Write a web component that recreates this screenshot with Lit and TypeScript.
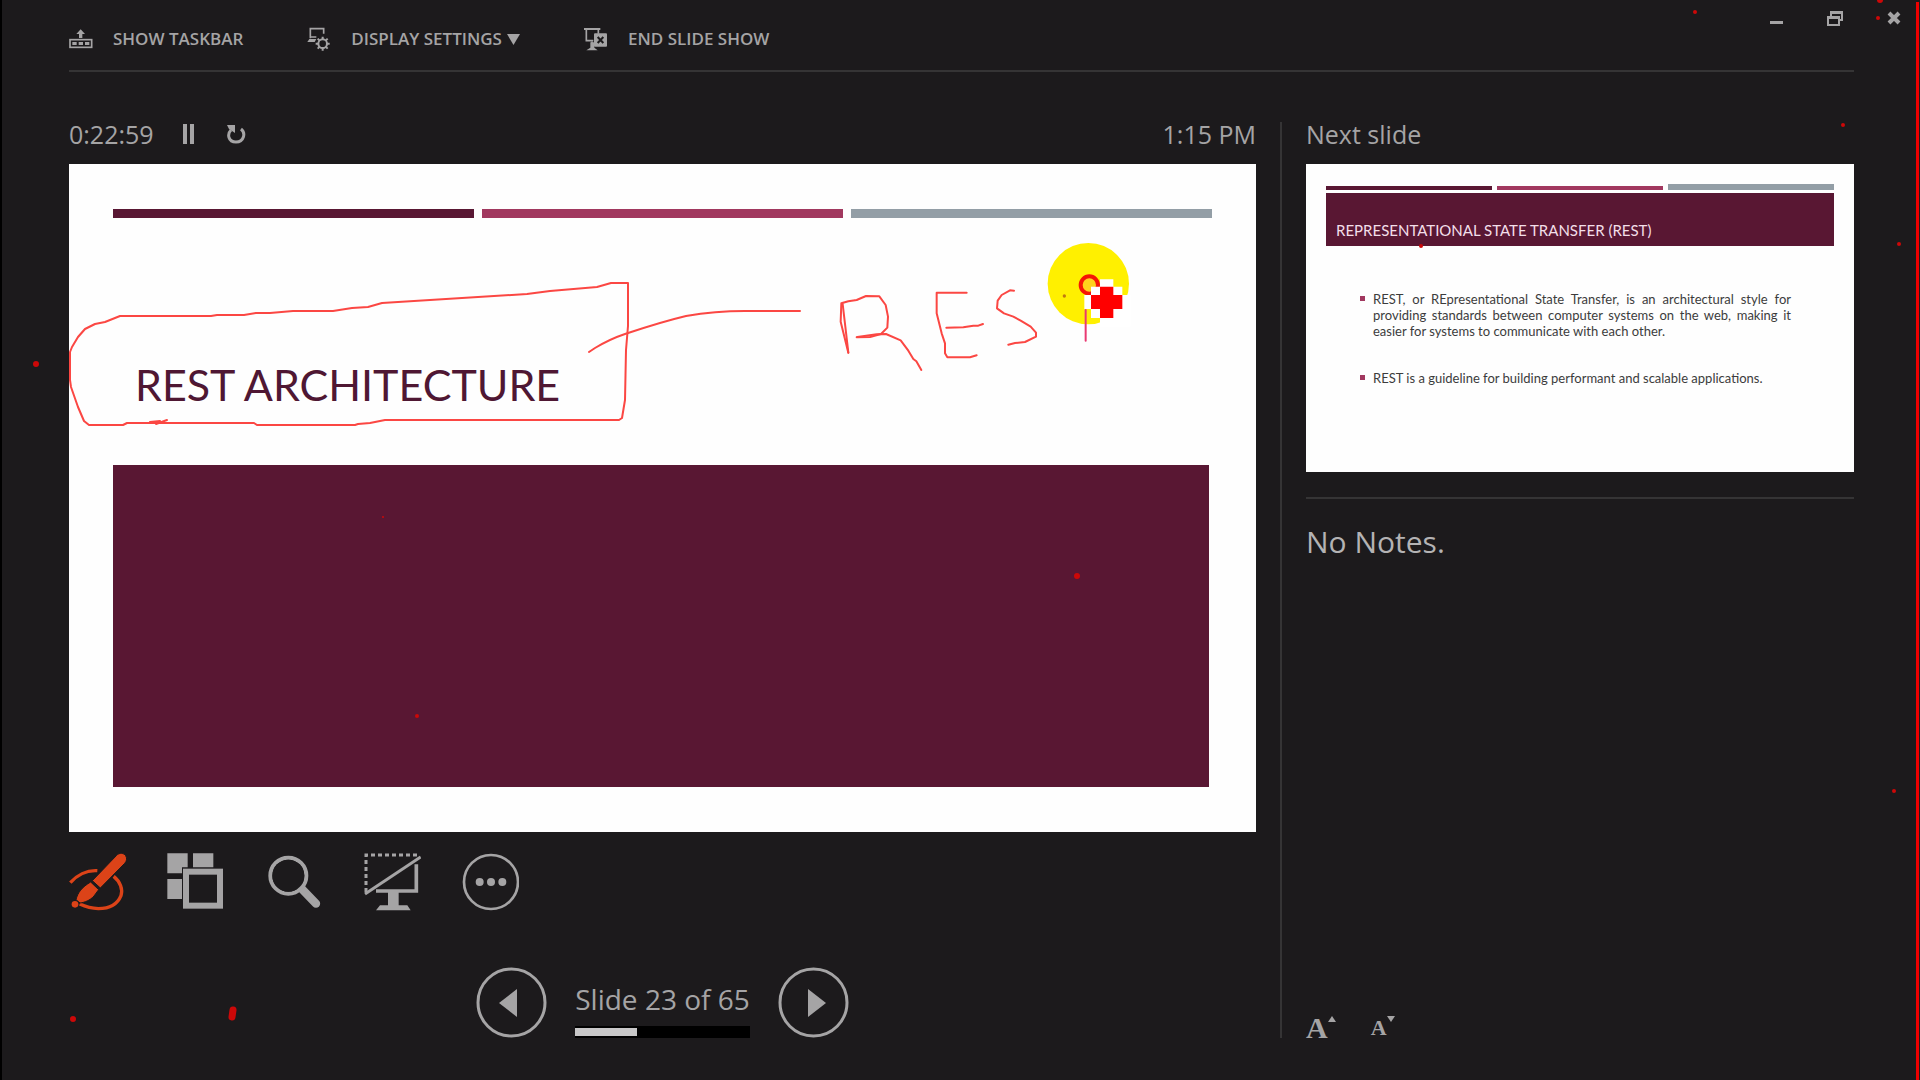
import { LitElement, html, css, svg } from "lit";
import { customElement, property, state } from "lit/decorators.js";

/** The three accent bars that run across the top of every slide. */
@customElement("accent-bars")
class AccentBars extends LitElement {
  static styles = css`
    :host {
      display: grid;
      grid-template-columns: repeat(3, 1fr);
      column-gap: var(--bar-gap, 8px);
      align-items: end;
    }
    .bar {
      height: var(--bar-height, 9px);
    }
    .dark {
      background: #591733;
    }
    .rose {
      background: #a1385f;
    }
    .slate {
      background: #939ea6;
      height: var(--last-bar-height, var(--bar-height, 9px));
    }
  `;
  render() {
    return html`<span class="bar dark"></span><span class="bar rose"></span><span class="bar slate"></span>`;
  }
}

@customElement("current-slide")
class CurrentSlide extends LitElement {
  static styles = css`
    :host {
      display: block;
      position: relative;
      aspect-ratio: 1187 / 668;
      background: #fefefe;
      color: #4f1733;
    }
    .frame {
      box-sizing: border-box;
      height: 100%;
      padding: 45px 44px;
      display: grid;
      grid-template-rows: auto 247fr 322fr;
    }
    .title {
      align-self: end;
      margin: 0;
      padding: 0 22px 56px;
      font: 400 43px/48px Lato, "Liberation Sans", sans-serif;
    }
    .block {
      background: #591733;
      margin-right: 3px;
    }
    .ink {
      position: absolute;
      inset: 0;
      width: 100%;
      height: 100%;
      overflow: visible;
      pointer-events: none;
    }
    .stroke {
      fill: none;
      stroke: #fb4743;
      stroke-width: 2;
      stroke-linejoin: round;
      stroke-linecap: round;
    }
    .thick {
      stroke-width: 6;
    }
  `;
  render() {
    return html`
      <div class="frame">
        <accent-bars></accent-bars>
        <h1 class="title">REST ARCHITECTURE</h1>
        <div class="block"></div>
      </div>
      <svg class="ink" viewBox="69 164 1187 668" aria-hidden="true">
        <path class="stroke" d="M628 283H611L597 287L550 291L527 294L382 303L368 307L352 308L333 311H293L270 313H256L244 315H217L211 316H120L105 322L95 324L85 329L78 337L72 347L70 352V380L71 387L78 407L84 421L89 425H123L127 423H254L257 425H355L358 424L370 423L385 420H619L622 418L625 400L626 350L628 326Z"/>
        <path class="stroke" d="M150 422L160 421L156 424L167 420"/>
        <path class="stroke" d="M589 352L595 348C605 342 613 338 625 334C646 327 665 321 686 316C715 311 730 311 745 311H800"/>
        <g transform="translate(780 160) scale(0.33333)">
          <circle cx="925" cy="371" r="122" fill="#fff000"/>
          <circle cx="853" cy="408" r="5" fill="#c07a10"/>
          <circle cx="928" cy="375" r="26" fill="#ffd21c" stroke="#f51505" stroke-width="12"/>
          <path fill="#fff" d="M960 358H1000V380H1027V405H1052V500H960V474H933V447H913V405H933V380H960Z"/>
          <path fill="#f00" d="M960 380H1000V405H1027V447H1000V474H960V447H933V405H960Z"/>
          <g class="stroke thick">
            <path d="M205 578L182 485L184 430L205 424L230 420L258 408L298 409L317 435L324 470L322 503L303 522L270 531L230 532"/>
            <path d="M188 432L196 500L205 578"/>
            <path d="M232 531L290 523L318 522L362 541L385 572L400 597L409 604L424 630"/>
            <path d="M560 398H470V460L485 520L495 550V580L502 592H570L590 586"/>
            <path d="M499 503L550 502L580 497H595L609 492"/>
            <path d="M702 392L690 391L665 405L653 422L651 445L672 460L700 470L722 482L752 500L768 518V530L735 546L705 549L685 554"/>
            <path d="M917 450V542" stroke="#e93a72"/>
          </g>
        </g>
      </svg>
    `;
  }
}

@customElement("next-slide")
class NextSlide extends LitElement {
  static styles = css`
    :host {
      display: block;
      box-sizing: border-box;
      aspect-ratio: 548 / 308;
      padding: 20px;
      background: #fefefe;
      color: #3c3c3c;
      font: 400 13px/16px Lato, "Liberation Sans", sans-serif;
      --bar-gap: 5px;
      --bar-height: 4px;
      --last-bar-height: 6px;
    }
    .title {
      margin: 3px 0 0;
      padding: 28px 10px 7px;
      background: #591733;
      color: #f3dfe9;
      font-weight: 400;
      font-size: 15px;
      line-height: 18px;
    }
    .points {
      list-style: none;
      margin: 0;
      padding: 45px 43px 0 34px;
      display: grid;
      row-gap: 31px;
    }
    .point {
      display: grid;
      grid-template-columns: 5px 1fr;
      column-gap: 8px;
      text-align: justify;
    }
    .point::before {
      content: "";
      width: 5px;
      height: 5px;
      margin-top: 5px;
      background: #a1385f;
    }
  `;
  render() {
    return html`
      <accent-bars></accent-bars>
      <h2 class="title">REPRESENTATIONAL STATE TRANSFER (REST)</h2>
      <ul class="points">
        <li class="point">REST, or REpresentational State Transfer, is an architectural style for providing standards between computer systems on the web, making it easier for systems to communicate with each other.</li>
        <li class="point">REST is a guideline for building performant and scalable applications.</li>
      </ul>
    `;
  }
}

const icons = {
  taskbar: svg`<path fill="currentColor" d="M62 43L75 57H67V69H57V57H49Z"/><rect x="30" y="74" width="65" height="23" fill="none" stroke="currentColor" stroke-width="5"/><path fill="currentColor" d="M37 81h13v9h-13zM56 81h13v9h-13zM75 81h13v9h-13z"/>`,
  display: svg`<path fill="none" stroke="currentColor" stroke-width="5" d="M61 70V41H101V56M61 66H79"/><path fill="currentColor" d="M58 72H79L74 81H52Z"/><circle cx="98" cy="86" r="13" fill="none" stroke="currentColor" stroke-width="6"/><path stroke="currentColor" stroke-width="6" d="M98 73V65M98 99V107M85 86H77M111 86H119M89 77L83 71M107 77L113 71M89 95L83 101M107 95L113 101"/>`,
  end: svg`<path fill="none" stroke="currentColor" stroke-width="6" d="M873 42H922"/><path fill="none" stroke="currentColor" stroke-width="5" d="M880 44V77H901M916 44V56M897 80V100"/><path fill="currentColor" d="M892 82H904V98L914 106H880L892 98Z"/><rect x="903" y="55" width="39" height="40" rx="3" fill="currentColor"/><path d="M914 66L931 84M931 66L914 84" stroke="#1c1a1c" stroke-width="6"/>`,
  pen: svg`<g fill="none" stroke="currentColor" stroke-width="10"><path d="M91 158C110 136 140 120 172 122"/><path d="M221 139C241 155 249 178 243 197C232 224 205 236 175 236C152 235 137 230 119 222"/></g><circle cx="105" cy="223" r="10" fill="currentColor"/><path fill="currentColor" stroke="#1c1a1c" stroke-width="3" d="M230 76C238 67 252 69 257 77C262 85 260 94 254 100L181 174L157 152ZM152 156L176 179L162 198C149 212 134 217 120 219L108 209C113 188 126 171 152 156Z"/>`,
  grid: svg`<path fill="currentColor" d="M382 70H443V112H426V130H382ZM459 70H520V112H459ZM382 147H426V207H382Z"/><rect x="438" y="125" width="102" height="102" fill="none" stroke="currentColor" stroke-width="18"/>`,
  zoom: svg`<circle cx="745" cy="137" r="54" fill="none" stroke="currentColor" stroke-width="12"/><path d="M784 175L828 221" stroke="currentColor" stroke-width="25" stroke-linecap="round"/><circle cx="745" cy="137" r="48" fill="#1c1a1c"/>`,
  black: svg`<path fill="none" stroke="currentColor" stroke-width="9" stroke-dasharray="12 9" d="M978 186V75H1132"/><path fill="none" stroke="currentColor" stroke-width="9" d="M975 192L1142 81"/><path fill="none" stroke="currentColor" stroke-width="11" d="M1129 103V183H1008"/><path fill="currentColor" d="M1044 186H1076V226H1102L1112 241H1008L1020 226H1044Z"/>`,
  more: svg`<circle cx="1353" cy="156" r="81" fill="none" stroke="currentColor" stroke-width="8"/><g fill="currentColor"><circle cx="1319" cy="156" r="12"/><circle cx="1353" cy="156" r="12"/><circle cx="1387" cy="156" r="12"/></g>`,
};

const specks: Array<[number, number, number]> = [
  [1695, 12, 2], [1880, 0, 3], [1878, 18, 2], [1843, 125, 2], [1899, 244, 2],
  [1421, 246, 2], [1894, 791, 2], [36, 364, 3], [1077, 576, 3], [417, 716, 2],
  [383, 517, 1], [73, 1019, 3],
];

@customElement("app-root")
class AppRoot extends LitElement {
  @property({ type: Number }) total = 65;
  @state() private current = 23;

  static styles = css`
    :host {
      display: flex;
      flex-direction: column;
      position: relative;
      box-sizing: border-box;
      min-height: 100vh;
      padding-bottom: 42px;
      overflow: hidden;
      border-left: 2px solid #000;
      background: #1c1a1c;
      color: #a5a4a5;
      font-family: "Open Sans", "Noto Sans", sans-serif;
    }
    button {
      display: inline-flex;
      align-items: center;
      padding: 0;
      border: 0;
      background: none;
      color: inherit;
      font: inherit;
      cursor: pointer;
    }
    svg {
      display: block;
      flex: none;
    }
    .header {
      display: flex;
      justify-content: space-between;
      height: 70px;
      padding: 0 18px 0 67px;
    }
    .commands {
      display: flex;
      gap: 64px;
      padding-top: 27px;
      height: 24px;
    }
    .command {
      gap: 20px;
      font-size: 17px;
      line-height: 24px;
      font-weight: 600;
      white-space: nowrap;
    }
    .label {
      display: flex;
      align-items: center;
      gap: 5px;
    }
    .window {
      display: flex;
      gap: 43px;
      padding-top: 10px;
      height: 16px;
    }
    .rule {
      height: 2px;
      margin: 0;
      border: 0;
      background: #353435;
    }
    .top-rule {
      margin: 0 66px 0 67px;
    }
    .main {
      flex: 1;
      display: grid;
      grid-template-columns: minmax(0, 1187fr) 50px minmax(0, 548fr);
      padding: 50px 66px 0 67px;
    }
    .column {
      display: flex;
      flex-direction: column;
    }
    .divider {
      justify-self: center;
      width: 2px;
      background: #353435;
    }
    .status {
      display: flex;
      align-items: center;
      height: 24px;
      margin: 0 0 18px;
      font-size: 25px;
      line-height: 24px;
      font-weight: 400;
    }
    .controls {
      display: flex;
      gap: 30px;
      padding-left: 28px;
    }
    .clock {
      margin-left: auto;
    }
    .tools {
      display: flex;
      gap: 40px;
      padding-top: 21px;
    }
    .active {
      color: #dc4318;
    }
    .nav {
      display: flex;
      justify-content: center;
      align-items: center;
      gap: 28px;
      margin-top: auto;
    }
    .counter {
      display: flex;
      flex-direction: column;
      gap: 8px;
      padding-top: 12px;
      font-size: 28px;
      line-height: 38px;
      white-space: nowrap;
    }
    .track {
      height: 8px;
      padding: 2px 0;
      background: #000;
    }
    .fill {
      height: 100%;
      background: #c8c7c8;
    }
    .notes-rule {
      margin-top: 25px;
    }
    .notes {
      margin: 0;
      padding-top: 23px;
      font-size: 30px;
      line-height: 40px;
      color: #b4b3b4;
    }
    .sizes {
      display: flex;
      gap: 35px;
      margin-top: auto;
      padding-bottom: 2px;
      font-family: "Liberation Serif", serif;
      font-weight: 700;
    }
    .size {
      align-items: flex-start;
      height: 20px;
    }
    .letter {
      align-self: flex-end;
      line-height: 16px;
    }
    .bigger {
      font-size: 30px;
    }
    .smaller {
      font-size: 22px;
    }
    .overlay {
      position: absolute;
      inset: 0;
      width: 100%;
      height: 100%;
      pointer-events: none;
    }
    .edge {
      position: absolute;
      inset: 2px 1px 0 auto;
      width: 3px;
      background: #ee0000;
    }
  `;

  private step(by: number) {
    this.current = Math.min(this.total, Math.max(1, this.current + by));
  }

  private tool(label: string, x: number, icon: unknown, active = false) {
    return html`<button class=${active ? "active" : ""} aria-label=${label}>
      <svg width="58" height="58" viewBox="${x} 69 174 174">${icon}</svg>
    </button>`;
  }

  render() {
    return html`
      <header class="header">
        <div class="commands">
          <button class="command">
            <svg width="24" height="24" viewBox="27 36 72 72">${icons.taskbar}</svg>SHOW TASKBAR
          </button>
          <button class="command">
            <svg width="24" height="24" viewBox="51 36 72 72">${icons.display}</svg>
            <span class="label">DISPLAY SETTINGS
              <svg width="13" height="11" viewBox="0 0 13 11"><path fill="currentColor" d="M0 0H13L6.500 11Z"/></svg>
            </span>
          </button>
          <button class="command">
            <svg width="24" height="24" viewBox="873 36 72 72">${icons.end}</svg>END SLIDE SHOW
          </button>
        </div>
        <div class="window">
          <button aria-label="Minimize"><svg width="16" height="16" viewBox="0 0 16 16"><path fill="currentColor" d="M2 11H15V14H2Z"/></svg></button>
          <button aria-label="Restore"><svg width="16" height="16" viewBox="0 0 16 16"><path fill="none" stroke="currentColor" stroke-width="2" d="M4 6V2H15V10H12M1 7H12V15H1Z"/><path stroke="currentColor" stroke-width="2" d="M4 3H15M1 8H12"/></svg></button>
          <button aria-label="Close"><svg width="16" height="16" viewBox="0 0 16 16"><path stroke="currentColor" stroke-width="4" d="M3 3L13 13M13 3L3 13"/></svg></button>
        </div>
      </header>
      <hr class="rule top-rule" />
      <main class="main">
        <section class="column">
          <div class="status">
            <span>0:22:59</span>
            <div class="controls">
              <button aria-label="Pause timer"><svg width="14" height="20" viewBox="0 0 14 20"><path fill="currentColor" d="M1 0H5V20H1ZM8 0H12V20H8Z"/></svg></button>
              <button aria-label="Restart timer"><svg width="20" height="20" viewBox="0 0 20 20"><path fill="none" stroke="currentColor" stroke-width="3" d="M5 6C1 10 2 18 10 18C18 18 20 9 15 5"/><path fill="currentColor" d="M1 1L9 1V9L6 7L3 5Z"/></svg></button>
            </div>
            <span class="clock">1:15 PM</span>
          </div>
          <current-slide></current-slide>
          <div class="tools">
            ${this.tool("Pen and laser pointer tools", 87, icons.pen, true)}
            ${this.tool("See all slides", 381, icons.grid)}
            ${this.tool("Zoom into the slide", 675, icons.zoom)}
            ${this.tool("Black or unblack slide show", 969, icons.black)}
            ${this.tool("More slide show options", 1263, icons.more)}
          </div>
          <nav class="nav">
            <button aria-label="Previous slide" @click=${() => this.step(-1)}>
              <svg width="71" height="71" viewBox="0 0 71 71"><circle cx="35.500" cy="35.500" r="33.500" fill="none" stroke="currentColor" stroke-width="3"/><path fill="currentColor" d="M41 22V50L23 36Z"/></svg>
            </button>
            <div class="counter">
              <span>Slide ${this.current} of ${this.total}</span>
              <div class="track"><div class="fill" style="width:${(this.current / this.total) * 100}%"></div></div>
            </div>
            <button aria-label="Next slide" @click=${() => this.step(1)}>
              <svg width="71" height="71" viewBox="0 0 71 71"><circle cx="35.500" cy="35.500" r="33.500" fill="none" stroke="currentColor" stroke-width="3"/><path fill="currentColor" d="M30 22V50L48 36Z"/></svg>
            </button>
          </nav>
        </section>
        <div class="divider"></div>
        <aside class="column">
          <h2 class="status">Next slide</h2>
          <next-slide></next-slide>
          <hr class="rule notes-rule" />
          <p class="notes">No Notes.</p>
          <div class="sizes">
            <button class="size bigger" aria-label="Make the text larger"><span class="letter">A</span><svg width="8" height="6" viewBox="0 0 8 6"><path fill="currentColor" d="M0 6L4 0L8 6Z"/></svg></button>
            <button class="size smaller" aria-label="Make the text smaller"><span class="letter">A</span><svg width="8" height="6" viewBox="0 0 8 6"><path fill="currentColor" d="M0 0H8L4 6Z"/></svg></button>
          </div>
        </aside>
      </main>
      <svg class="overlay" viewBox="2 0 1918 1080" preserveAspectRatio="none" aria-hidden="true">
        ${specks.map(([x, y, r]) => svg`<circle cx=${x} cy=${y} r=${r} fill="#cc0808"/>`)}
        <path d="M233 1010L232 1017" stroke="#cc0808" stroke-width="7" stroke-linecap="round"/>
      </svg>
      <div class="edge"></div>
    `;
  }
}
